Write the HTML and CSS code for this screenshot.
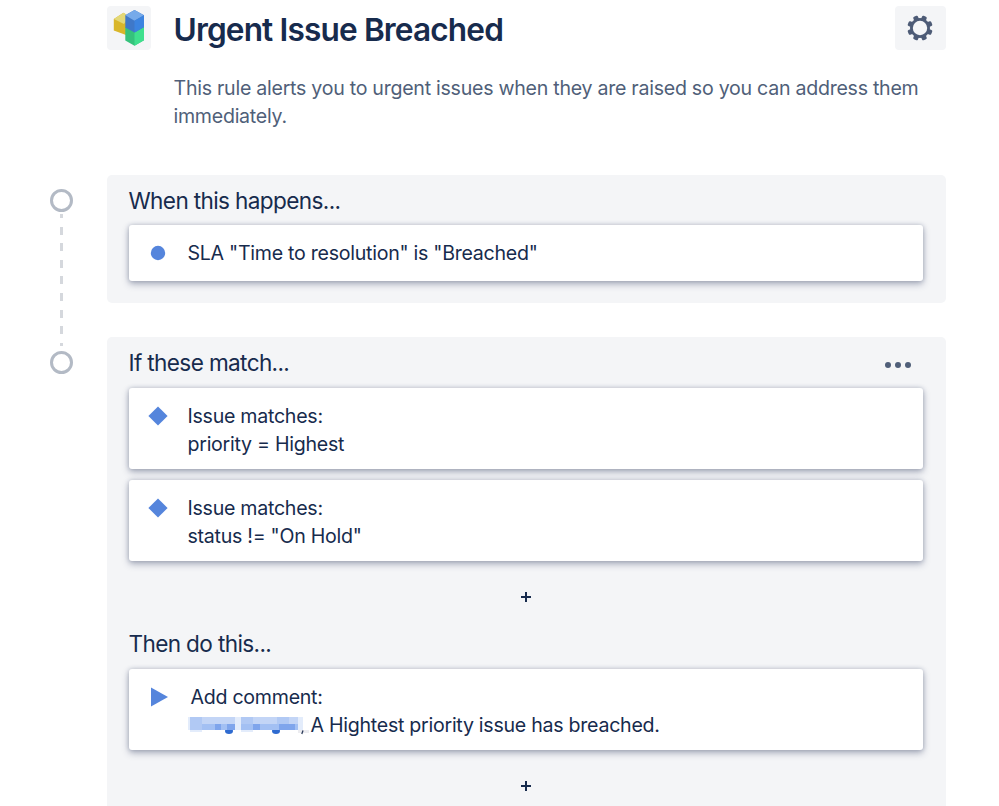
FILE: index.html
```
<!DOCTYPE html>
<html lang="en">
<head>
    <meta charset="UTF-8">
    <meta name="viewport" content="width=device-width, initial-scale=1.0">
    <title>Urgent Issue Breached</title>
    <link rel="stylesheet" href="styles.css">
</head>
<body>
    <header class="header">
        <div class="logo">
            <svg width="44" height="44" viewBox="0 0 44 44">
                <path d="M6.800 13 16.500 6.800 19 8.500V29L6.800 24.500Z" fill="#d9b62a"/>
                <path d="M6.800 13 16.500 6.800 19 8.500V15L17 18Z" fill="#e3d878"/>
                <path d="M18.300 21H37V34.200L27.500 39.800 18.300 34.500Z" fill="#35c27c"/>
                <path d="M27.500 26.500 37 21V34.200L27.500 39.800Z" fill="#3fe08e"/>
                <path d="M18.300 9.300 27.500 4 37 9.300V21L27.500 26.500 18.300 21.500Z" fill="#3f78c8"/>
                <path d="M18.300 9.300 27.500 4 37 9.300 27.500 14.800Z" fill="#76aaea"/>
                <path d="M27.500 14.800 37 9.300V21L27.500 26.500Z" fill="#3c84e0"/>
            </svg>
        </div>
        <div class="intro">
            <h1>Urgent Issue Breached</h1>
            <p>This rule alerts you to urgent issues when they are raised so you can address them immediately.</p>
        </div>
        <button class="settings" aria-label="Settings">
            <svg width="28" height="28" viewBox="-14 -14 28 28">
                <g fill="#4d5b76" transform="rotate(22.500)">
                    <rect x="-2.500" y="-12.700" width="5" height="25.400" rx="1.300"/>
                    <rect x="-2.500" y="-12.700" width="5" height="25.400" rx="1.300" transform="rotate(45)"/>
                    <rect x="-2.500" y="-12.700" width="5" height="25.400" rx="1.300" transform="rotate(90)"/>
                    <rect x="-2.500" y="-12.700" width="5" height="25.400" rx="1.300" transform="rotate(135)"/>
                    <circle r="10"/>
                </g>
                <circle r="7.200" fill="#f4f5f7"/>
            </svg>
        </button>
    </header>

    <section class="step when">
        <div class="gutter">
            <span class="ring"></span>
            <span class="dashes"></span>
        </div>
        <div class="panel">
            <h2>When this happens...</h2>
            <div class="card single">
                <svg class="icon" width="20" height="20" viewBox="0 0 20 20"><circle cx="10" cy="10" r="7.200"/></svg>
                <p>SLA "Time to resolution" is "Breached"</p>
            </div>
        </div>
    </section>

    <section class="step">
        <div class="gutter">
            <span class="ring"></span>
        </div>
        <div class="panel">
            <div class="panel-head">
                <h2>If these match...</h2>
                <svg class="more" width="28" height="8" viewBox="0 0 28 8">
                    <circle cx="4" cy="4" r="3"/><circle cx="14" cy="4" r="3"/><circle cx="24" cy="4" r="3"/>
                </svg>
            </div>
            <div class="card">
                <svg class="icon" width="20" height="20" viewBox="0 0 20 20"><path d="M10 .4 19.600 10 10 19.600 .4 10Z"/></svg>
                <p>Issue matches:<br>priority = Highest</p>
            </div>
            <div class="card">
                <svg class="icon" width="20" height="20" viewBox="0 0 20 20"><path d="M10 .4 19.600 10 10 19.600 .4 10Z"/></svg>
                <p>Issue matches:<br>status != "On Hold"</p>
            </div>
            <div class="add"><svg width="12" height="12" viewBox="0 0 12 12"><path d="M6 1V11M1 6H11"/></svg></div>
            <h2 class="then">Then do this...</h2>
            <div class="card action">
                <svg class="icon" width="20" height="20" viewBox="0 0 20 20"><path d="M3 .5 20 10 3 19.500Z"/></svg>
                <div>
                    <p>Add comment:</p>
                    <div class="comment">
                        <!-- pixelated user mention -->
                        <svg class="mention" width="120" height="20" viewBox="0 0 120 20">
                            <g fill="#2f6bd0">
                                <ellipse cx="38" cy="16" rx="4" ry="3"/>
                                <ellipse cx="85" cy="16" rx="4" ry="3"/>
                            </g>
                            <path d="M-1 2H44V15H-1ZM50 2H107V15H50Z" fill="#c3d5f6"/>
                            <path d="M-1 2H11V15H-1ZM50 2H62V9H50ZM86 2H98V9H86Z" fill="#b1c9f4"/>
                            <path d="M11 9H44V15H11ZM50 9H107V15H50Z" fill="#a3c0f3"/>
                            <path d="M24 9H30V15H24ZM36 9H44V15H36ZM62 9H69V15H62ZM88 9H104V15H88Z" fill="#7fa5ec"/>
                            <path d="M44 2H50V15H44ZM107 2H112V15H107ZM-1 15H11V17H-1ZM50 15H62V17H50ZM-3 2H-1V15H-3Z" fill="#e3ecfb"/>
                            <path d="M107 15H118V18H107Z" fill="#ececf0"/>
                            <path d="M112 15.500 110.800 19" stroke="#2b3a59" stroke-width="1.300"/>
                        </svg>
                        <p>A Hightest priority issue has breached.</p>
                    </div>
                </div>
            </div>
            <div class="add"><svg width="12" height="12" viewBox="0 0 12 12"><path d="M6 1V11M1 6H11"/></svg></div>
        </div>
    </section>
</body>
</html>
```
FILE: styles.css
```
body {
    margin: 0;
    width: 999px;
    height: 806px;
    overflow: hidden;
    background: #fff;
    color: #172b4d;
    font-family: Inter, "Liberation Sans", sans-serif;
    font-size: 19.6px;
    line-height: 28px;
    letter-spacing: -0.27px;
}
h1, h2, p {
    margin: 0;
}
.header {
    display: flex;
    justify-content: space-between;
    height: 169px;
    box-sizing: border-box;
    padding: 6px 53.5px 0 106.5px;
}
.logo {
    flex: none;
    width: 44.5px;
    height: 44px;
    border-radius: 4px;
    background: #f4f5f7;
}
.logo svg, .settings svg {
    display: block;
}
.intro {
    width: 770px;
    margin: 0 -48px 0 22.5px;
}
h1 {
    font-size: 31.6px;
    line-height: 47px;
    font-weight: 600;
    letter-spacing: -0.85px;
}
.intro p {
    margin-top: 21px;
    color: #505f79;
}
.settings {
    flex: none;
    width: 50.5px;
    height: 44px;
    padding: 0;
    border: none;
    border-radius: 4px;
    background: #f4f5f7;
    display: flex;
    align-items: center;
    justify-content: center;
}
.step {
    display: flex;
    margin-top: 6px;
}
.when {
    height: 156px;
}
.gutter {
    width: 106.5px;
    padding: 14px 0 0 50px;
    box-sizing: border-box;
    display: flex;
    flex-direction: column;
}
.ring {
    flex: none;
    width: 23px;
    height: 23px;
    box-sizing: border-box;
    border: 3px solid #b3bac5;
    border-radius: 50%;
}
.dashes {
    flex: none;
    width: 3px;
    height: 132px;
    margin: 2px 0 0 10px;
    background: repeating-linear-gradient(#d5d8dd 0 8px, transparent 8px 16.6px) 0 -4px;
    background-size: 3px 160px;
}
.panel {
    width: 839px;
    height: 469px;
    padding: 10px 22.5px 0 22px;
    box-sizing: border-box;
    border-radius: 5px 5px 0 0;
    background: #f4f5f7;
}
.when .panel {
    height: 128px;
    border-radius: 5px;
}
h2 {
    font-size: 22.6px;
    line-height: 32px;
    font-weight: 400;
    letter-spacing: -0.64px;
}
.panel-head {
    display: flex;
    justify-content: space-between;
}
.more {
    margin: 14px 11.5px 0 0;
    fill: #505f79;
}
.card {
    display: flex;
    margin-top: 9px;
    padding: 14px 0 11px 19px;
    border-radius: 3px;
    background: #fff;
    box-shadow: 0 3px 7px rgba(60, 70, 105, .4), 0 0 4px rgba(60, 70, 105, .25);
}
.single {
    margin-top: 8px;
    padding-bottom: 14px;
}
.card + .card {
    margin-top: 11px;
}
.icon {
    flex: none;
    margin: 4px 20px 0 0;
    fill: #5585dc;
}
.add {
    height: 12px;
    padding-top: 30px;
    text-align: center;
    line-height: 0;
}
.add path {
    stroke: #172b4d;
    stroke-width: 2;
}
.then {
    margin-top: 25px;
}
.action .icon {
    margin-right: 23px;
}
.comment {
    display: flex;
}
.mention {
    margin-top: 4px;
    overflow: visible;
}
```
